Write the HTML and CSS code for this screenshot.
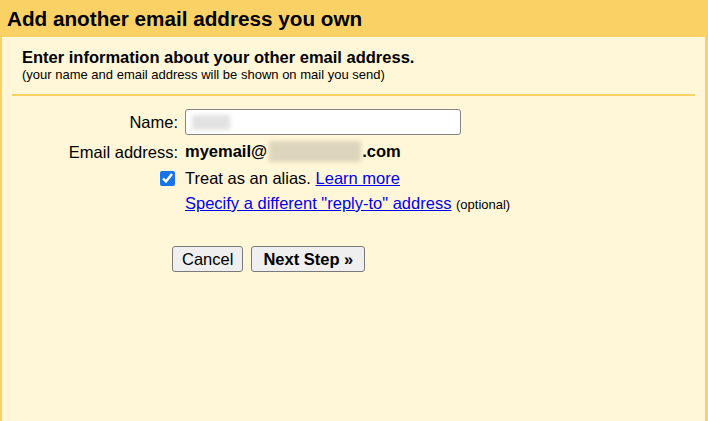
FILE: index.html
```html
<!DOCTYPE html>
<html lang="en">
<head>
    <meta charset="UTF-8">
    <title>Add another email address you own</title>
    <link rel="stylesheet" href="styles.css">
</head>
<body>
    <div class="banner">
        <h1>Add another email address you own</h1>
    </div>

    <div class="panel">
        <div class="intro">
            <h2>Enter information about your other email address.</h2>
            <p>(your name and email address will be shown on mail you send)</p>
        </div>

        <form class="form">
            <div class="row row-name">
                <label class="label" for="name">Name:</label>
                <div class="field">
                    <span class="blur blur-name"></span>
                    <input type="text" id="name" class="input">
                </div>
            </div>

            <div class="row">
                <span class="label">Email address:</span>
                <span class="email">myemail@<span class="blur blur-domain"></span>.com</span>
            </div>

            <div class="row">
                <span class="label"><input type="checkbox" class="check" checked></span>
                <span>Treat as an alias. <a href="#">Learn more</a></span>
            </div>

            <div class="row">
                <span class="label"></span>
                <span><a href="#">Specify a different "reply-to" address</a> <small>(optional)</small></span>
            </div>

            <div class="actions">
                <button type="button" class="button">Cancel</button>
                <button type="button" class="button primary">Next Step &raquo;</button>
            </div>
        </form>
    </div>
</body>
</html>
```

FILE: styles.css
```css
* {
    margin: 0;
    padding: 0;
    box-sizing: border-box;
}

html, body {
    height: 100%;
}

body {
    font-family: "Liberation Sans", Arial, sans-serif;
    font-size: 16.5px;
    color: #000;
    background: #fff7d8;
    display: flex;
    flex-direction: column;
}

.banner {
    background: #fad165;
    height: 37px;
    padding: 6px 0 0 7px;
}

.banner h1 {
    font-size: 20.7px;
    line-height: 25px;
    font-weight: 700;
}

.panel {
    flex: 1;
    border-left: 2px solid #fad165;
    border-right: 3px solid #fad165;
    padding: 0 10px;
}

.intro {
    padding: 11px 0 12px 10px;
    border-bottom: 2px solid #fad165;
}

.intro h2 {
    font-size: 16.5px;
    line-height: 19px;
    font-weight: 700;
}

.intro p {
    font-size: 13px;
    line-height: 15px;
}

.form {
    padding-top: 13px;
}

.row {
    display: flex;
    align-items: center;
    line-height: 18px;
    margin-bottom: 7px;
}

.row-name {
    margin-bottom: 6px;
}

.label {
    width: 166px;
    margin-right: 7px;
    text-align: right;
    display: flex;
    justify-content: flex-end;
}

.field {
    position: relative;
}

.input {
    width: 276px;
    height: 26px;
    border: 1px solid #858585;
    border-radius: 3px;
    background: #fff;
    font: inherit;
    padding: 0 5px;
}

.blur {
    display: inline-block;
    filter: blur(2px);
}

.blur-name {
    position: absolute;
    left: 7px;
    top: 6px;
    width: 38px;
    height: 15px;
    background: #e2e2e2;
}

.blur-domain {
    width: 92px;
    height: 21px;
    background: #ddd5bb;
    vertical-align: -5px;
    margin: 0 1px 0 2px;
}

.email {
    font-weight: 700;
}

.check {
    width: 15px;
    height: 15px;
    margin-right: 3px;
    accent-color: #1a73e8;
}

a {
    color: #0000ee;
}

small {
    font-size: 13px;
}

.actions {
    display: flex;
    gap: 8px;
    padding: 25px 0 0 160px;
}

.button {
    height: 26px;
    padding: 0 9px;
    font: inherit;
    background: #efefef;
    border: 1px solid #7a7a7a;
    border-radius: 3px;
    color: #000;
}

.primary {
    font-weight: 700;
    padding: 0 11px;
}
```
